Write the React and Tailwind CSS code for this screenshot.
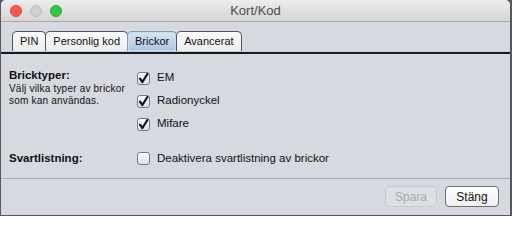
const font = { fontFamily: '"Liberation Sans", Arial, sans-serif' }

function Check({ checked, label }) {
  return (
    <div className="flex items-center gap-[7px] h-[14px]">
      <span className="flex items-center justify-center w-[13px] h-[13px] rounded-[3px] border border-[#6f7c90] bg-gradient-to-b from-[#f4f8fc] to-[#d8e2ee] shadow-[inset_0_1px_0_#fff]">
        {checked && (
          <svg width="11" height="11" viewBox="0 0 11 11">
            <path d="M2 5.6 L4.4 9 L9.4 1" fill="none" stroke="#111" strokeWidth="2.2" strokeLinecap="round" strokeLinejoin="round" />
          </svg>
        )}
      </span>
      <span className="text-[11.5px] text-[#111]">{label}</span>
    </div>
  )
}

function Tab({ label, active }) {
  return (
    <div
      className={
        'h-[20px] px-[7px] flex items-center border border-b-0 rounded-t-[5px] text-[11px] -ml-px first:ml-0 ' +
        (active
          ? 'border-[#7f9bbd] bg-gradient-to-b from-[#d9e6f4] to-[#a9c4e2] text-[#111] shadow-[inset_0_0_0_1px_#c9dbef]'
          : 'border-[#555] bg-gradient-to-b from-[#fbfbfb] to-[#ededed] text-[#111]')
      }
    >
      {label}
    </div>
  )
}

export default function App() {
  return (
    <div className="w-[512px] h-[216px] bg-[#55585c] flex overflow-hidden" style={font}>
      <div className="w-[509px] h-[215px] ml-px bg-[#d6d9df] rounded-t-[5px] flex flex-col overflow-hidden">
        {/* title bar */}
        <div className="relative h-[22px] shrink-0 flex items-center pl-[9px] gap-[8px] bg-gradient-to-b from-[#ededed] to-[#d4d4d4] border-b border-[#acacac]">
          <span className="w-[12px] h-[12px] rounded-full bg-[#fc5753] border border-[#df4744]" />
          <span className="w-[12px] h-[12px] rounded-full bg-[#cfcfcf] border border-[#bdbdbd]" />
          <span className="w-[12px] h-[12px] rounded-full bg-[#33c748] border border-[#27aa35]" />
          <div className="absolute inset-0 flex items-center justify-center text-[13px] text-[#4d4d4d]">Kort/Kod</div>
        </div>

        {/* tabs */}
        <div className="flex pl-[11px] pt-[9px]">
          <Tab label="PIN" />
          <Tab label="Personlig kod" />
          <Tab label="Brickor" active />
          <Tab label="Avancerat" />
        </div>
        <div className="h-[3px] shrink-0 bg-[#b9cde3] border-b-2 border-[#1a1a1a] -ml-px" />

        {/* content */}
        <div className="flex flex-col pt-[13px] pl-[8px]">
          <div className="flex">
            <div className="w-[128px] text-[#111]">
              <div className="text-[11.5px] font-bold leading-[16px]">Bricktyper:</div>
              <div className="text-[10px] tracking-[0.2px] leading-[12px]">Välj vilka typer av brickor som kan användas.</div>
            </div>
            <div className="flex flex-col gap-[9px] pt-[4px]">
              <Check checked label="EM" />
              <Check checked label="Radionyckel" />
              <Check checked label="Mifare" />
            </div>
          </div>
          <div className="flex items-center mt-[19px]">
            <div className="w-[128px] text-[11.5px] font-bold text-[#111]">Svartlistning:</div>
            <Check label="Deaktivera svartlistning av brickor" />
          </div>
        </div>

        <div className="mt-[11px] border-t border-[#a9adb3]" />

        <div className="flex justify-end gap-[8px] pr-[11px] pt-[7px]">
          <button className="w-[52px] h-[21px] rounded-[4px] border border-[#c6c9ce] bg-[#dcdfe4] text-[12px] text-[#a6a9ae]">Spara</button>
          <button className="w-[54px] h-[21px] rounded-[4px] border border-[#6f6f6f] bg-gradient-to-b from-[#ffffff] to-[#f0f0f0] text-[12px] text-[#111]">Stäng</button>
        </div>
      </div>
    </div>
  )
}
